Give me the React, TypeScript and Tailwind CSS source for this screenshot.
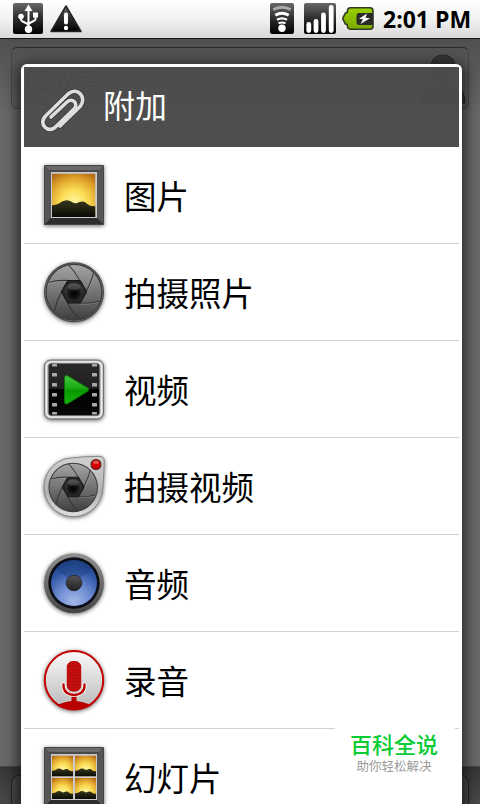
import { ReactNode } from 'react';

const StatusGradient = ({ id }: { id: string }) => (
    <linearGradient id={id} x1="0" y1="0" x2="0" y2="1">
        <stop offset="0" stopColor="#686868" />
        <stop offset="0.5" stopColor="#2c2c2c" />
        <stop offset="1" stopColor="#000" />
    </linearGradient>
);

const UsbIcon = () => (
    <svg width="30" height="31" viewBox="0 0 30 31">
        <defs>
            <StatusGradient id="usb" />
        </defs>
        <rect width="30" height="31" rx="2" fill="url(#usb)" />
        <g fill="none" stroke="#fff" strokeWidth="2">
            <path d="M15.500 6v20M8 14v2.500c0 3 7.500 3 7.500 6M22.500 12v4c0 3-7 2.500-7 6" />
        </g>
        <path d="M15.500 1.500l4 6.500h-8z" fill="#fff" />
        <circle cx="8" cy="13.500" r="2.800" fill="#fff" />
        <rect x="20" y="9.500" width="5" height="5" fill="#fff" />
        <circle cx="15.500" cy="26.300" r="3.700" fill="#fff" />
    </svg>
);

const WarningIcon = () => (
    <svg width="32" height="31" viewBox="0 0 32 31">
        <defs>
            <StatusGradient id="warn" />
        </defs>
        <path
            d="M16 3L31 28.500H1z"
            fill="url(#warn)"
            stroke="#222"
            strokeWidth="1.500"
            strokeLinejoin="round"
        />
        <path d="M16 11.500v8" stroke="#fff" strokeWidth="4" strokeLinecap="round" />
        <circle cx="16" cy="25" r="2.200" fill="#fff" />
    </svg>
);

const WifiIcon = () => (
    <svg width="24" height="31" viewBox="0 0 24 31">
        <defs>
            <StatusGradient id="wifi" />
        </defs>
        <rect width="24" height="31" rx="2" fill="url(#wifi)" />
        <g fill="none" strokeWidth="3">
            <path d="M3.300 6.500Q12 1.800 20.700 6.500" stroke="#aaa" />
            <path d="M5.300 12.200Q12 8.200 18.700 12.200" stroke="#fff" />
            <path d="M7 16.700Q12 14 17 16.700" stroke="#fff" strokeWidth="2.400" />
            <path d="M8.500 20.300Q12 18.500 15.500 20.300" stroke="#fff" strokeWidth="2" />
        </g>
        <circle cx="12" cy="25.300" r="3.700" fill="#fff" />
    </svg>
);

const SignalIcon = () => (
    <svg width="32" height="31" viewBox="0 0 32 31">
        <defs>
            <StatusGradient id="signal" />
        </defs>
        <rect width="32" height="31" rx="2" fill="url(#signal)" />
        <path
            d="M4.800 21.500v6M12 18.500v9M19.500 12v15.500M27.200 4.500v23"
            stroke="#fff"
            strokeWidth="4.800"
            strokeLinecap="round"
        />
    </svg>
);

const BatteryIcon = () => (
    <svg width="32" height="31" viewBox="0 0 32 31">
        <defs>
            <linearGradient id="battery" x1="0" y1="0" x2="0" y2="1">
                <stop offset="0" stopColor="#9bd000" />
                <stop offset="1" stopColor="#7aa800" />
            </linearGradient>
        </defs>
        <path
            d="M8.500 4.800H28q3 0 3 3v15.400q0 3-3 3H8.500q-2.500 0-3-2.500l-.5-2.500H4q-1 0-1.500-2L1 16.500v-2L2.500 12q.5-2 1.500-2.200H5l.5-2.500q.5-2.500 3-2.500z"
            fill="url(#battery)"
            stroke="#303a20"
            strokeWidth="1.600"
        />
        <path d="M17 10H31v12H17q-2.500 0-2.500-3v-6q0-3 2.500-3z" fill="#292929" />
        <path d="M25 10.500l-8 5.200 4 .6-2.500 4.700 9.500-5.800-4.500-.5z" fill="#fff" />
    </svg>
);

const ClipIcon = () => (
    <svg width="48" height="46" viewBox="0 0 48 46" fill="none" strokeLinecap="round">
        <path
            d="M22 40L42.500 20C49 12 40 0 30 8L8 29.500C-1 38 11 48.500 18 40.500L36 23C41 17 34 11.500 29 16L13 31"
            stroke="#363636"
            strokeWidth="5"
        />
        <path
            d="M22 40L42.500 20C49 12 40 0 30 8L8 29.500C-1 38 11 48.500 18 40.500L36 23C41 17 34 11.500 29 16L13 31"
            stroke="#dedede"
            strokeWidth="3.600"
        />
    </svg>
);

const Scene = ({ x, y, size }: { x: number; y: number; size: number }) => (
    <svg x={x} y={y} width={size} height={size} viewBox="0 0 44 44" overflow="hidden">
        <rect width="44" height="44" fill="url(#sunset)" />
        <path
            d="M0 32C7 32 10 27 15 27C19 27 22 31 25 30C29 28 32 27 36 31Q39 33.500 44 33V44H0z"
            fill="url(#hills)"
        />
    </svg>
);

const SceneDefs = () => (
    <defs>
        <radialGradient id="sunset" cx="0.5" cy="0.68" r="0.78">
            <stop offset="0" stopColor="#fff8a8" />
            <stop offset="0.4" stopColor="#fbdc55" />
            <stop offset="0.75" stopColor="#dda02a" />
            <stop offset="1" stopColor="#b36a14" />
        </radialGradient>
        <linearGradient id="hills" x1="0" y1="0" x2="0" y2="1">
            <stop offset="0" stopColor="#38381e" />
            <stop offset="1" stopColor="#0a0b04" />
        </linearGradient>
    </defs>
);

const Frame = () => (
    <>
        <rect x="6" y="6" width="60" height="60" rx="1.500" fill="#494949" />
        <path d="M6 6h60l-5 5H11z" fill="#6a6a6a" />
        <path d="M6.500 7l7 7v45l-7 7z" fill="#555" />
        <path d="M65.500 7l-7 7v45l7 7z" fill="#555" />
        <path d="M6 66h60l-7-7H13z" fill="#2d2d2d" />
        <rect x="6.500" y="6.500" width="59" height="59" rx="1.500" fill="none" stroke="#444" />
        <rect x="13" y="13" width="46" height="46" fill="#c9c9cf" />
    </>
);

const IconBox = ({ children }: { children: ReactNode }) => (
    <svg
        width="72"
        height="72"
        viewBox="0 0 72 72"
        className="shrink-0 drop-shadow-[0_1px_2px_rgba(0,0,0,0.6)]"
    >
        {children}
    </svg>
);

const PictureIcon = () => (
    <IconBox>
        <SceneDefs />
        <Frame />
        <Scene x={14} y={14.5} size={43.5} />
    </IconBox>
);

const SlideshowIcon = () => (
    <IconBox>
        <Frame />
        <Scene x={14} y={14.5} size={21} />
        <Scene x={37} y={14.5} size={21} />
        <Scene x={14} y={37} size={21} />
        <Scene x={37} y={37} size={21} />
    </IconBox>
);

const Shutter = () => (
    <>
        <circle cx="36" cy="36" r="28.500" fill="url(#blades)" stroke="#3c3c3c" strokeWidth="1.200" />
        <g fill="none" stroke="#373737" strokeWidth="1.200">
            <path d="M30 8Q36 13 42 24" />
            <path d="M56 16Q54 25 48.500 35" />
            <path d="M62 45Q51 48 42 47" />
            <path d="M42 63Q34 57 29.500 47" />
            <path d="M16 55Q18 46 23 36" />
            <path d="M10 26Q19 23.500 29.500 24" />
        </g>
        <g fill="none" stroke="#aaa" strokeWidth="0.600" opacity="0.700">
            <path d="M31.300 8Q37 13 43 24" />
            <path d="M57 17Q55 26 49.500 36" />
            <path d="M62 46Q51 49 42 48" />
            <path d="M9 27Q19 24.500 29.500 25" />
        </g>
        <path d="M29.500 24H42.500L49 35.500 42.500 47H29.500L23 35.500z" fill="#252525" stroke="#151515" />
        <circle cx="36" cy="35.500" r="9.500" fill="url(#lens)" />
        <ellipse cx="36" cy="30.500" rx="6" ry="3.300" fill="#888" opacity="0.350" />
    </>
);

const CameraIcon = () => (
    <IconBox>
        <defs>
            <linearGradient id="blades" x1="0" y1="0" x2="0" y2="1">
                <stop offset="0" stopColor="#a5a5a5" />
                <stop offset="0.5" stopColor="#747474" />
                <stop offset="1" stopColor="#3e3e3e" />
            </linearGradient>
            <radialGradient id="lens" cx="0.5" cy="0.6" r="0.55">
                <stop offset="0" stopColor="#000" />
                <stop offset="0.5" stopColor="#151515" />
                <stop offset="1" stopColor="#414141" />
            </radialGradient>
        </defs>
        <circle cx="36" cy="36.300" r="30" fill="#484848" />
        <circle cx="36" cy="36.300" r="28.800" fill="#858585" />
        <g transform="translate(.7 1) scale(.98)">
            <Shutter />
        </g>
    </IconBox>
);

const VideoIcon = () => (
    <IconBox>
        <defs>
            <linearGradient id="film" x1="0" y1="0" x2="0" y2="1">
                <stop offset="0" stopColor="#292929" />
                <stop offset="0.49" stopColor="#202020" />
                <stop offset="0.5" stopColor="#000" />
                <stop offset="1" stopColor="#080808" />
            </linearGradient>
            <linearGradient id="play" x1="0" y1="0" x2="0" y2="1">
                <stop offset="0" stopColor="#42c63b" />
                <stop offset="0.48" stopColor="#19a611" />
                <stop offset="0.5" stopColor="#079600" />
                <stop offset="1" stopColor="#18b50d" />
            </linearGradient>
        </defs>
        <rect x="6.500" y="7" width="59" height="59" rx="6" fill="#b9b9b9" stroke="#707070" />
        <rect x="8.300" y="8.800" width="55.400" height="55.400" rx="5" fill="none" stroke="#f4f4f4" strokeWidth="1.300" />
        <rect x="10.500" y="10.500" width="51" height="52" rx="3" fill="url(#film)" stroke="#6e6e6e" strokeWidth="0.800" />
        <g fill="#a9a9a9">
            {[11, 20, 30, 40, 50, 59].map((y) => (
                <g key={y}>
                    <rect x="14" y={y} width="5" height={y === 11 || y === 59 ? 2.5 : 3.5} rx="0.600" />
                    <rect x="54" y={y} width="5" height={y === 11 || y === 59 ? 2.5 : 3.5} rx="0.600" />
                </g>
            ))}
        </g>
        <path
            d="M26.500 25.500Q26.500 21.500 30 23L49 34.500Q52.500 36.500 49 38.800L30 50.500Q26.500 52.500 26.500 48z"
            fill="url(#play)"
            stroke="#087504"
            strokeWidth="0.800"
        />
    </IconBox>
);

const CamcorderIcon = () => (
    <IconBox>
        <defs>
            <linearGradient id="body" x1="0" y1="0" x2="0" y2="1">
                <stop offset="0" stopColor="#d2d2d2" />
                <stop offset="0.6" stopColor="#b1b1b1" />
                <stop offset="1" stopColor="#e0e0e0" />
            </linearGradient>
        </defs>
        <path
            d="M29 8.500Q45 6.500 61 6.300Q66.500 6.500 66.200 11Q66 25 64.800 38A29.400 29.400 0 1 1 29 8.500z"
            fill="url(#body)"
            stroke="#808080"
            strokeWidth="0.900"
        />
        <g transform="translate(4.600 6.800) scale(.85)">
            <Shutter />
        </g>
        <circle cx="58" cy="14.500" r="4.900" fill="#d40000" stroke="#671a1a" strokeWidth="1.200" />
        <ellipse cx="58" cy="12.300" rx="3" ry="1.800" fill="#f36a6a" opacity="0.700" />
    </IconBox>
);

const SpeakerIcon = () => (
    <IconBox>
        <defs>
            <linearGradient id="rim" x1="0" y1="0" x2="0" y2="1">
                <stop offset="0" stopColor="#929292" />
                <stop offset="1" stopColor="#444" />
            </linearGradient>
            <radialGradient id="cone" cx="0.5" cy="0.9" r="0.85">
                <stop offset="0" stopColor="#a5b7e9" />
                <stop offset="0.4" stopColor="#718fd4" />
                <stop offset="0.8" stopColor="#3057a5" />
                <stop offset="1" stopColor="#25488f" />
            </radialGradient>
            <linearGradient id="cap" x1="0" y1="0" x2="0" y2="1">
                <stop offset="0" stopColor="#565656" />
                <stop offset="1" stopColor="#202020" />
            </linearGradient>
        </defs>
        <circle cx="36" cy="36.300" r="30" fill="url(#rim)" />
        <circle cx="36" cy="36" r="25.700" fill="#0b0e15" />
        <circle cx="36" cy="36" r="23" fill="url(#cone)" />
        <path d="M36 36L18 22A23 23 0 0 1 54 22z" fill="#15366f" opacity="0.350" />
        <circle cx="36" cy="36" r="7.800" fill="url(#cap)" stroke="#20252e" strokeWidth="0.800" />
    </IconBox>
);

const MicIcon = () => (
    <IconBox>
        <defs>
            <linearGradient id="disc" x1="0" y1="0" x2="0" y2="1">
                <stop offset="0" stopColor="#fafafa" />
                <stop offset="1" stopColor="#b9b9b9" />
            </linearGradient>
            <pattern id="mesh" width="3" height="3" patternUnits="userSpaceOnUse">
                <rect width="3" height="3" fill="#c90d0d" />
                <circle cx="1.500" cy="1.500" r="0.800" fill="#951010" />
            </pattern>
        </defs>
        <circle cx="36" cy="36.300" r="29.200" fill="url(#disc)" stroke="#c40000" strokeWidth="2" />
        <path d="M20 60.500Q27 57.500 33.500 57V50H38.500V57Q45 57.500 52 60.500Q36 70.500 20 60.500z" fill="#b80000" />
        <path
            d="M25.500 40.500V42C25.500 54 46.500 54 46.500 42V40.500"
            fill="none"
            stroke="#fff"
            strokeWidth="4"
            strokeLinecap="round"
        />
        <path
            d="M25.500 40.500V42C25.500 54 46.500 54 46.500 42V40.500"
            fill="none"
            stroke="#b80000"
            strokeWidth="2.400"
            strokeLinecap="round"
        />
        <rect x="29.300" y="17.500" width="13.400" height="29.500" rx="5.500" fill="url(#mesh)" stroke="#b80000" />
    </IconBox>
);

const items = [
    { label: '图片', icon: <PictureIcon /> },
    { label: '拍摄照片', icon: <CameraIcon /> },
    { label: '视频', icon: <VideoIcon /> },
    { label: '拍摄视频', icon: <CamcorderIcon /> },
    { label: '音频', icon: <SpeakerIcon /> },
    { label: '录音', icon: <MicIcon /> },
    { label: '幻灯片', icon: <SlideshowIcon /> },
];

const StatusBar = () => (
    <div className="flex h-[39px] shrink-0 items-start border-b border-[#161616] bg-linear-to-b from-white via-[#f2f2f2] to-[#d8d8d8] pt-[3px] pl-[13px]">
        <UsbIcon />
        <div className="ml-[7px]">
            <WarningIcon />
        </div>
        <div className="ml-[188px] flex gap-2.5">
            <WifiIcon />
            <SignalIcon />
        </div>
        <div className="ml-1.5">
            <BatteryIcon />
        </div>
        <span className="ml-[9px] font-['Open_Sans',sans-serif] text-[23px] leading-[33px] font-bold whitespace-nowrap text-black">
            2:01 PM
        </span>
    </div>
);

const ComposeScreen = () => (
    <div className="flex grow flex-col bg-linear-to-b from-[#505050] via-[#696969] via-10% to-[#696969]">
        <div className="mx-[11px] mt-2 flex h-[62px] items-start justify-between rounded-md border border-[#464646] border-t-[#282828] bg-linear-to-b from-[#525252] to-[#606060] pr-px pl-3">
            <span className="pt-[13px] text-[26px] leading-[36px] text-[#222]">接收者</span>
            <svg width="48" height="54" viewBox="0 0 48 54" className="mt-1.5">
                <path
                    d="M24 1C14 1 10 9 13 19Q14 27 18 28Q2 32 2 49H46Q46 32 30 28Q34 27 35 19C38 9 34 1 24 1z"
                    fill="#353535"
                    stroke="#252525"
                />
            </svg>
        </div>
        <div className="mt-auto flex h-[38px] justify-center border-t border-[#494949] bg-linear-to-b from-[#373737] to-[#494949] px-[11px] pt-2">
            <div className="grow rounded-t-lg border border-b-0 border-[#262626] bg-[#494949]" />
        </div>
    </div>
);

const AttachDialog = () => (
    <div className="absolute top-16 left-[21px] w-[441px] rounded-t-md border-x-[3px] border-t-[3px] border-white shadow-[0_4px_14px_4px_rgba(0,0,0,0.6)]">
        <div className="flex h-20 items-start bg-[#4c4c4c]/94 pl-3.5">
            <div className="mt-[19px]">
                <ClipIcon />
            </div>
            <h1 className="ml-[17px] pt-[13px] text-[32px] leading-[48px] text-white">附加</h1>
        </div>
        <ul className="bg-white">
            {items.map((item) => (
                <li
                    key={item.label}
                    className="flex h-[97px] items-start border-b border-[#d2d2d2] pt-3 pl-3.5"
                >
                    {item.icon}
                    <span className="ml-3.5 pt-3 text-[32.5px] leading-[48px] text-black">
                        {item.label}
                    </span>
                </li>
            ))}
        </ul>
    </div>
);

const App = () => {
    return (
        <div className="relative flex h-[804px] w-[480px] flex-col overflow-hidden font-['Noto_Sans_CJK_SC',sans-serif]">
            <StatusBar />
            <ComposeScreen />
            <AttachDialog />
            <div className="absolute top-[720px] left-[335px] flex h-[64px] w-[120px] flex-col items-center bg-white pt-2.5 pr-0.5">
                <span className="text-[22px] leading-[26px] font-medium text-[#09cc35]">百科全说</span>
                <span className="pt-0.5 text-[12.5px] leading-4 text-[#999]">助你轻松解决</span>
            </div>
        </div>
    );
};

export default App;
